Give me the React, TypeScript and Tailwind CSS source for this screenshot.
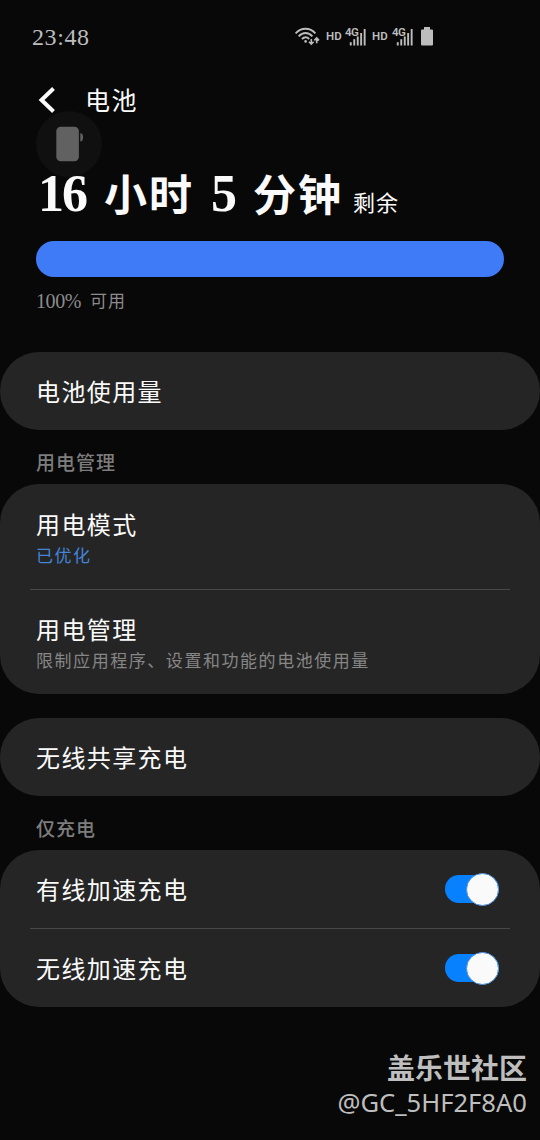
import type { ReactNode } from 'react'

function WifiIcon() {
  return (
    <svg width="25" height="20" viewBox="0 0 25 20" fill="none" stroke="#bdbdbd" strokeWidth="1.9">
      <path d="M.6 6.4C6 .2 15 .2 20.4 6.4" />
      <path d="M3.7 9.3C7.8 4.8 13.3 4.8 17.4 9.3" />
      <path d="M6.9 12C9.3 9.6 12 9.6 14.2 12" />
      <circle cx="10.6" cy="14.4" r="1.3" fill="#bdbdbd" stroke="none" />
      <path d="M16.3 12V17M14 14.8L16.3 17.2L18.6 14.8M21.7 16.2V11.6M19.4 13.4L21.7 11L24 13.4" strokeWidth="1.6" />
    </svg>
  )
}

function SignalIcon() {
  return (
    <div className="relative h-[20px] w-[21px]">
      <svg width="21" height="20" viewBox="0 0 21 20" fill="#bdbdbd">
        <rect x="4.8" y="15.2" width="1.9" height="3.3" />
        <rect x="8.3" y="12.2" width="1.9" height="6.3" />
        <rect x="11.8" y="9.5" width="1.9" height="9" />
        <rect x="15.2" y="6" width="1.9" height="12.5" />
        <rect x="18.7" y="2" width="1.9" height="16.5" />
      </svg>
      <span className="absolute -top-px left-0 font-['Roboto',sans-serif] text-[11.5px] leading-[12px] font-semibold tracking-[-0.5px]">
        4G
      </span>
    </div>
  )
}

function StatusBar() {
  return (
    <div className="flex h-[74px] items-center pl-[32px] text-[#bdbdbd]">
      <span className="w-[263px] font-['Liberation_Serif',serif] text-[24px] tracking-[0.6px]">23:48</span>
      <div className="flex items-center pb-px font-['Roboto',sans-serif] text-[11.5px] font-semibold">
        <WifiIcon />
        <span className="ml-[6px] w-[19px]">HD</span>
        <SignalIcon />
        <span className="ml-[6px] w-[20px]">HD</span>
        <SignalIcon />
        <svg className="ml-[8px]" width="12" height="19" viewBox="0 0 12 19" fill="#bdbdbd">
          <path d="M3 0H9V2.5H11Q12 2.5 12 3.5V17.5Q12 18.5 11 18.5H1Q0 18.5 0 17.5V3.5Q0 2.5 1 2.5H3Z" />
        </svg>
      </div>
    </div>
  )
}

function Card({ children }: { children: ReactNode }) {
  return <section className="rounded-[39px] bg-[#252525]">{children}</section>
}

function SectionLabel({ children }: { children: ReactNode }) {
  return (
    <h2 className="flex h-[54px] items-center pt-[15px] pl-[36px] text-[19px] font-medium tracking-[1px] text-[#7d7d7d]">
      {children}
    </h2>
  )
}

function Title({ children }: { children: ReactNode }) {
  return <span className="text-[24px] leading-[30px] tracking-[1.4px] text-[#fafafa]">{children}</span>
}

function Divider() {
  return <div className="mx-[30px] h-px bg-[#484848]" />
}

function Toggle() {
  return (
    <div className="flex h-[28px] w-[54px] items-center justify-end rounded-full bg-[#0881ff]">
      <div className="h-[33px] w-[33px] shrink-0 rounded-full border border-[#4a8fe0] bg-[#fafafa]" />
    </div>
  )
}

const toggles = ['有线加速充电', '无线加速充电']

export default function App() {
  return (
    <div className="relative h-[1140px] w-[540px] overflow-hidden bg-[#080808] font-['Liberation_Serif','Noto_Sans_CJK_SC',sans-serif]">
      {/* faded battery badge, sits behind the heading */}
      <div className="absolute top-[111px] left-[36px] h-[66px] w-[66px] rounded-full bg-[#101010]">
        <svg width="66" height="66" viewBox="0 0 66 66" fill="#616161">
          <rect x="20.3" y="15.8" width="22.6" height="34.4" rx="4.5" />
          <path d="M44.3 22Q47 22.5 47 25V27.5Q47 30 44.3 30.5Z" />
        </svg>
      </div>

      <div className="relative">
        <StatusBar />

        <header className="flex h-[54px] items-center pb-[2px] pl-[38px]">
          <svg width="18" height="26" viewBox="0 0 18 26" fill="none" stroke="#fafafa" strokeWidth="4">
            <path d="M15.5 1.5L3.5 13L15.5 24.5" />
          </svg>
          <h1 className="ml-[29px] pt-[4px] text-[25px] leading-[30px] tracking-[1.6px] text-[#fafafa]">电池</h1>
        </header>

        <div className="flex h-[113px] items-end pb-[7px] pl-[38px] text-[#fafafa]">
          <div className="flex items-baseline text-[43px] leading-[60px] font-bold">
            <span className="w-[66px] text-[52px] tracking-[-2px]">16</span>
            <span className="w-[107px] tracking-[2px]">小时</span>
            <span className="w-[42px] text-[52px]">5</span>
            <span className="w-[100px] tracking-[2px]">分钟</span>
            <span className="text-[22px] font-normal tracking-[1px]">剩余</span>
          </div>
        </div>

        <div className="mx-[36px] h-[36px] rounded-full bg-[#3f7af7]" />
        <div className="flex h-[75px] items-start pt-[9px] pl-[36px] text-[#8c8c8c]">
          <span className="w-[54px] text-[20px] leading-[30px] tracking-[-0.4px]">100%</span>
          <span className="pt-px text-[17px] leading-[30px] tracking-[1px]">可用</span>
        </div>

        <Card>
          <div className="flex h-[78px] items-center pt-[4px] pl-[36px]">
            <Title>电池使用量</Title>
          </div>
        </Card>

        <SectionLabel>用电管理</SectionLabel>
        <Card>
          <div className="flex h-[105px] flex-col pt-[27px] pl-[36px]">
            <Title>用电模式</Title>
            <span className="pt-px text-[17px] leading-[30px] tracking-[1.5px] text-[#4384d6]">已优化</span>
          </div>
          <Divider />
          <div className="flex h-[104px] flex-col pt-[26px] pl-[36px]">
            <Title>用电管理</Title>
            <span className="pt-px text-[17px] leading-[30px] tracking-[1.55px] text-[#868686]">
              限制应用程序、设置和功能的电池使用量
            </span>
          </div>
        </Card>

        <div className="mt-[24px]">
          <Card>
            <div className="flex h-[78px] items-center pt-[4px] pl-[36px]">
              <Title>无线共享充电</Title>
            </div>
          </Card>
        </div>

        <SectionLabel>仅充电</SectionLabel>
        <Card>
          {toggles.map((name, i) => (
            <div key={name}>
              {i > 0 && <Divider />}
              <div className="flex h-[78px] items-center justify-between pr-[41px] pl-[36px]">
                <div className="pt-[4px]">
                  <Title>{name}</Title>
                </div>
                <Toggle />
              </div>
            </div>
          ))}
        </Card>
      </div>

      {/* community watermark */}
      <div className="absolute right-[13px] bottom-[19px] flex flex-col items-end text-[#bebebe]">
        <span className="font-['Noto_Sans_CJK_SC',sans-serif] text-[28px] leading-[36px] font-bold">盖乐世社区</span>
        <span className="font-['Noto_Sans',sans-serif] text-[25.6px] leading-[36px]">@GC_5HF2F8A0</span>
      </div>
    </div>
  )
}
